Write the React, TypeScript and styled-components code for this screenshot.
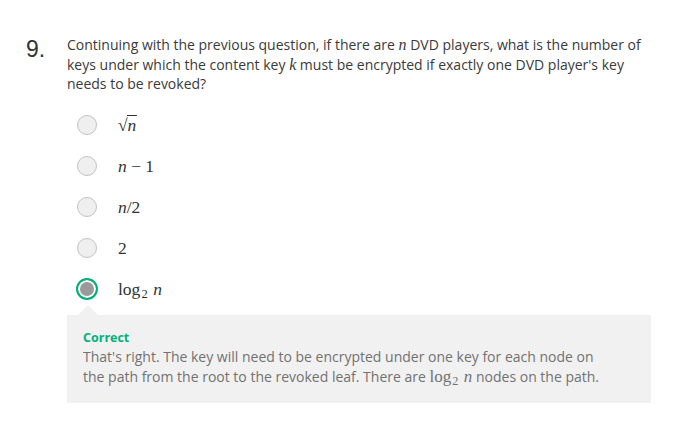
import React from 'react';
import styled, { createGlobalStyle } from 'styled-components';

const GlobalStyle = createGlobalStyle`
  html, body {
    margin: 0;
    padding: 0;
    background: #fff;
  }
  body {
    font-family: "Open Sans", "Liberation Sans", sans-serif;
    color: #333;
  }
`;

const StyledPage = styled.div`
  display: flex;
  flex-direction: row;
  padding: 35px 0 0 26px;
`;

const StyledNumber = styled.div`
  width: 42px;
  flex: none;
  font-family: "Liberation Sans", Arial, sans-serif;
  font-size: 23px;
  line-height: 26px;
  margin-top: 1px;
  color: #333;
`;

const StyledBody = styled.div`
  width: 584px;
  margin-left: -1px;
`;

const StyledPrompt = styled.p`
  margin: 0;
  font-size: 14px;
  line-height: 19.5px;
  color: #3a3a3a;
`;

const MathVar = styled.span<{ size?: number }>`
  font-family: "Liberation Serif", "Times New Roman", serif;
  font-style: italic;
  font-size: ${({ size }) => size ?? 16}px;
  line-height: 1;
`;

const MathRoman = styled.span<{ size?: number }>`
  font-family: "Liberation Serif", "Times New Roman", serif;
  font-size: ${({ size }) => size ?? 16}px;
  line-height: 1;
`;

const MathSub = styled.sub`
  font-family: "Liberation Serif", "Times New Roman", serif;
  font-size: 0.72em;
  vertical-align: -0.3em;
  line-height: 0;
  margin-left: 1px;
  margin-right: 0.45em;
`;

const SqrtBody = styled.span`
  display: inline-block;
  border-top: 1px solid #333;
  line-height: 1;
  padding: 1px 1px 0 1px;
  margin-left: -1px;
`;

const StyledOptions = styled.ul`
  list-style: none;
  margin: 11px 0 0 0;
  padding: 0;
`;

const StyledOption = styled.li`
  display: flex;
  flex-direction: row;
  align-items: center;
  height: 41px;
  padding-left: 10px;
`;

const Radio = styled.span<{ selected?: boolean }>`
  flex: none;
  box-sizing: border-box;
  border-radius: 50%;
  width: ${({ selected }) => (selected ? 22 : 20)}px;
  height: ${({ selected }) => (selected ? 22 : 20)}px;
  margin-left: ${({ selected }) => (selected ? -1 : 0)}px;
  margin-right: ${({ selected }) => (selected ? 20 : 21)}px;
  background: ${({ selected }) => (selected ? '#9a9a9a' : '#efefef')};
  border: ${({ selected }) => (selected ? '2.5px solid #00b27a' : '1px solid #c2c2c2')};
  box-shadow: ${({ selected }) => (selected ? 'inset 0 0 0 2px #fff' : 'none')};
`;

const Label = styled.span`
  font-family: "Liberation Serif", "Times New Roman", serif;
  font-size: 17.5px;
  color: #333;
`;

const StyledFeedback = styled.div`
  position: relative;
  margin-top: 5px;
  background: #f1f1f1;
  padding: 14px 16px 16px 16px;

  &::before {
    content: '';
    position: absolute;
    top: -10px;
    left: 11px;
    border-left: 10px solid transparent;
    border-right: 10px solid transparent;
    border-bottom: 10px solid #f1f1f1;
  }
`;

const StyledVerdict = styled.div`
  color: #00b27a;
  font-weight: 700;
  font-size: 12.5px;
  line-height: 18px;
`;

const StyledExplanation = styled.p`
  margin: 0;
  font-size: 14px;
  line-height: 20px;
  color: #727272;
`;

const Log2N = ({ size }: { size: number }) => (
  <span style={{ whiteSpace: 'nowrap' }}>
    <MathRoman size={size}>log</MathRoman>
    <MathSub style={{ fontSize: size * 0.72 }}>2</MathSub>
    <MathVar size={size}>n</MathVar>
  </span>
);

const options: { key: string; label: React.ReactNode; selected?: boolean }[] = [
  {
    key: 'sqrt',
    label: (
      <>
        <span>√</span>
        <SqrtBody>
          <i>n</i>
        </SqrtBody>
      </>
    ),
  },
  { key: 'n-1', label: <><i>n</i> − 1</> },
  { key: 'n/2', label: <><i>n</i>/2</> },
  { key: '2', label: <>2</> },
  { key: 'log', label: <Log2N size={17.5} />, selected: true },
];

export default function App() {
  return (
    <>
      <GlobalStyle />
      <StyledPage>
        <StyledNumber>9.</StyledNumber>
        <StyledBody>
          <StyledPrompt>
            Continuing with the previous question, if there are <MathVar>n</MathVar> DVD players, what is the number of
            keys under which the content key <MathVar>k</MathVar> must be encrypted if exactly one DVD player's key
            needs to be revoked?
          </StyledPrompt>
          <StyledOptions>
            {options.map((o) => (
              <StyledOption key={o.key}>
                <Radio selected={o.selected} />
                <Label>{o.label}</Label>
              </StyledOption>
            ))}
          </StyledOptions>
          <StyledFeedback>
            <StyledVerdict>Correct</StyledVerdict>
            <StyledExplanation>
              That's right. The key will need to be encrypted under one key for each node on
              <br />
              the path from the root to the revoked leaf. There are <Log2N size={17} /> nodes on the path.
            </StyledExplanation>
          </StyledFeedback>
        </StyledBody>
      </StyledPage>
    </>
  );
}
